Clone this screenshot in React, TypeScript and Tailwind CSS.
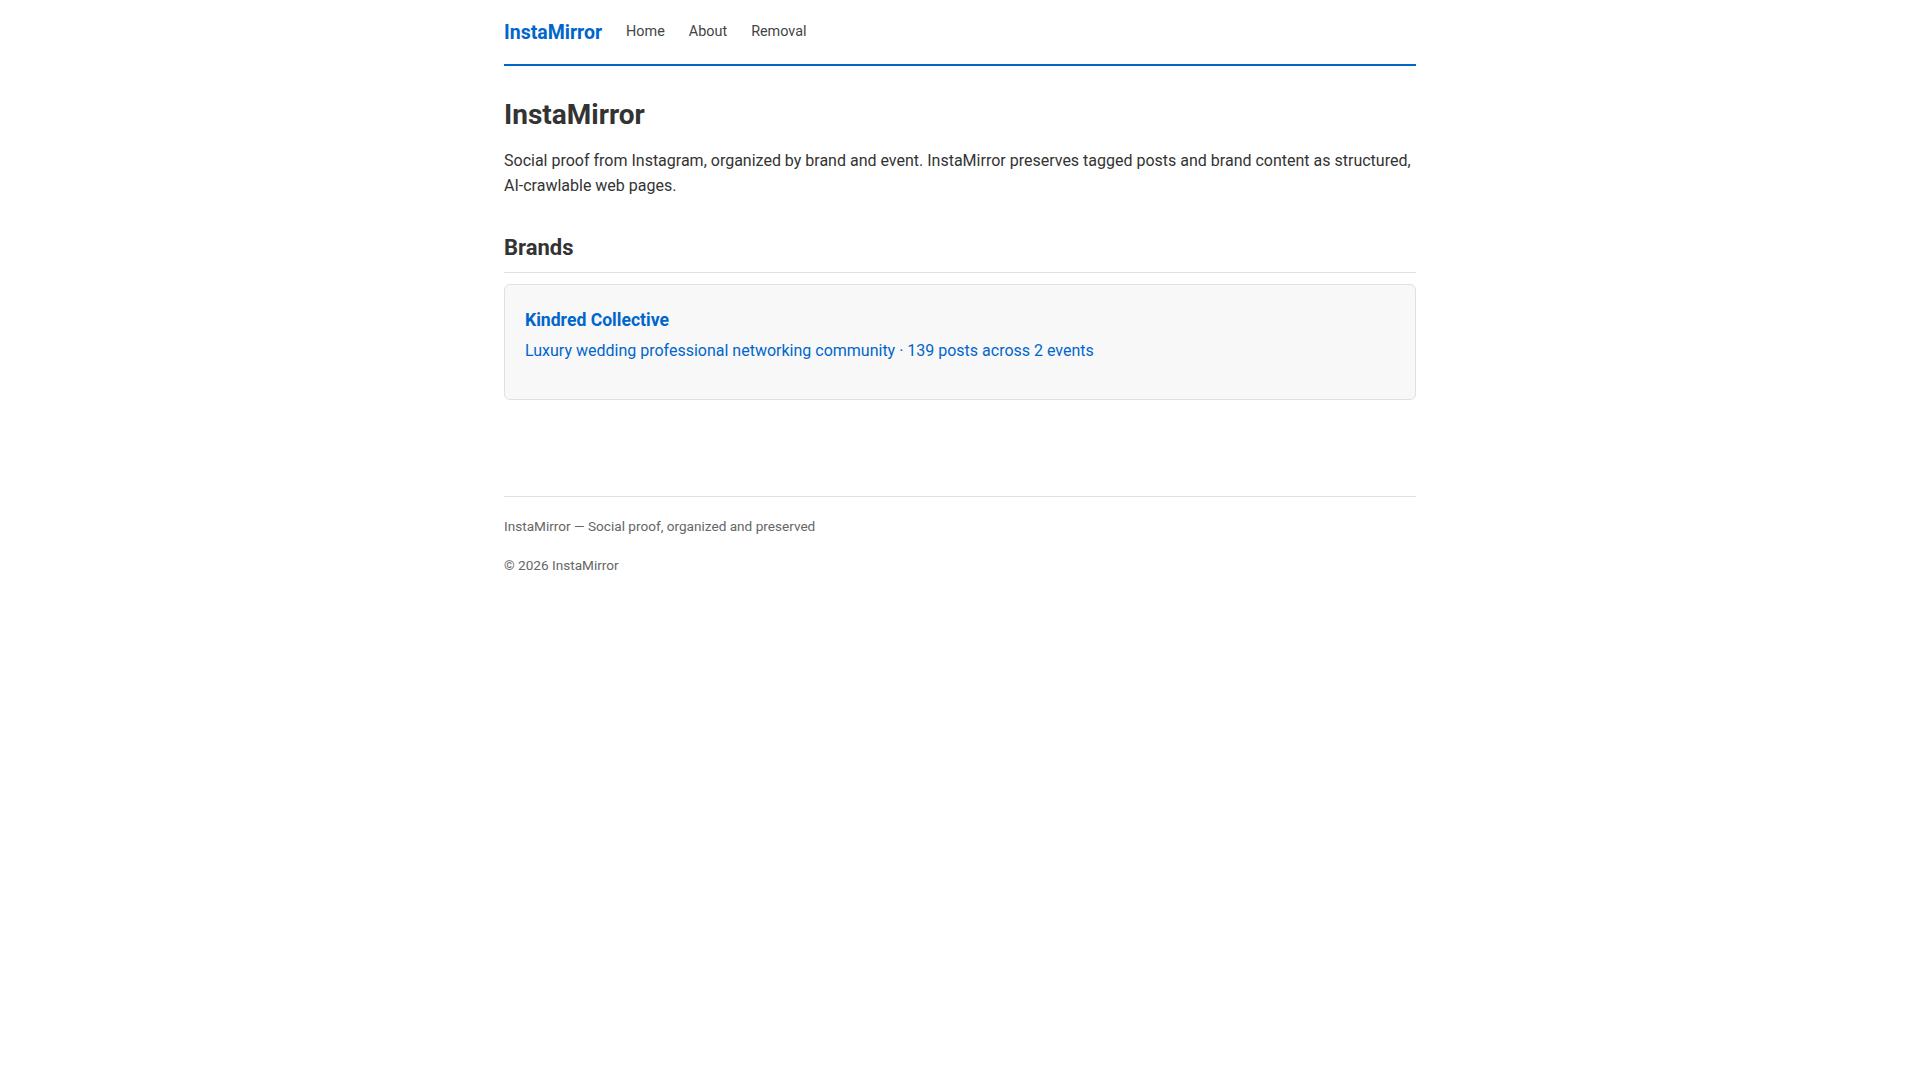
export default function App() {
  return (
    <div className="min-h-screen bg-white text-[#333] font-['Roboto','Liberation_Sans',sans-serif]">
      <div className="max-w-[960px] mx-auto px-6">
        <header className="h-[66px] pt-[1.5px] flex items-center gap-6 border-b-2 border-[#0066cc]">
          <a href="#" className="text-[19.5px] font-bold text-[#0066cc] leading-none">
            InstaMirror
          </a>
          <nav className="flex items-center gap-6 mb-[1px] text-[14.4px] text-[#444]">
            <a href="#">Home</a>
            <a href="#">About</a>
            <a href="#">Removal</a>
          </nav>
        </header>

        <main className="pt-[32px]">
          <h1 className="text-[28px] font-bold leading-[1.2]">InstaMirror</h1>
          <p className="mt-[16px] text-base leading-[25px]">
            Social proof from Instagram, organized by brand and event. InstaMirror preserves tagged posts and brand content as
            structured, AI-crawlable web pages.
          </p>

          <h2 className="mt-[37px] text-[22px] font-bold leading-[1.2] pb-[11px] border-b border-[#e0e0e0]">Brands</h2>

          <div className="mt-[11.5px] bg-[#f8f8f8] border border-[#e0e0e0] rounded-md px-5 pt-[22px] pb-5">
            <a href="#" className="block text-[17.6px] font-bold leading-normal text-[#0066cc]">
              Kindred Collective
            </a>
            <p className="mt-[5px] mb-4 text-base leading-6 text-[#0066cc]">
              Luxury wedding professional networking community · 139 posts across 2 events
            </p>
          </div>
        </main>

        <footer className="mt-[96px] border-t border-[#e0e0e0] pt-[19.5px] text-[13.6px] leading-[1.5] text-[#666]">
          <p>InstaMirror — Social proof, organized and preserved</p>
          <p className="mt-[18px]">© 2026 InstaMirror</p>
        </footer>
      </div>
    </div>
  );
}
